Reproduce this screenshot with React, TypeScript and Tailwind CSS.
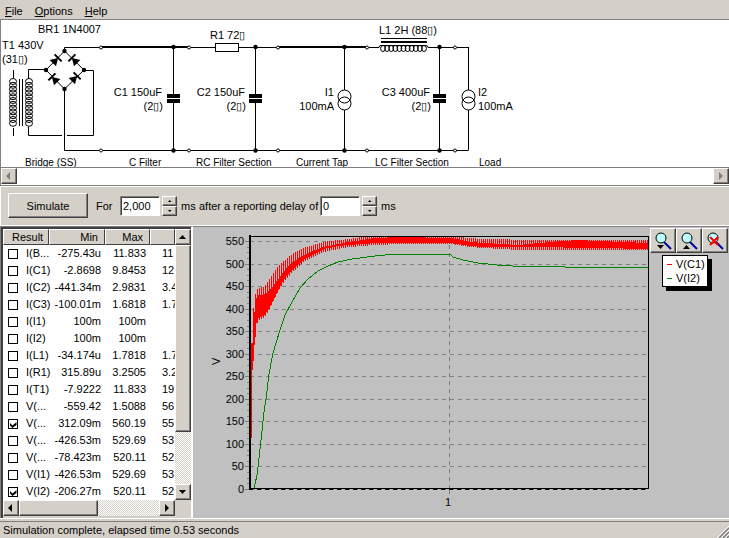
import React from 'react';
import clsx from 'clsx';

const RAISED = 'bg-[#d4d0c8] border border-t-white border-l-white border-r-[#404040] border-b-[#404040] shadow-[inset_-1px_-1px_0_#808080]';
const TRACK = 'bg-[repeating-conic-gradient(#d4d0c8_0_25%,#ffffff_0_50%)] bg-size-[2px_2px]';

type Result = { name: string; min: string; max: string; next: string; checked?: boolean };

const results: Result[] = [
  { name: 'I(B...', min: '-275.43u', max: '11.833', next: '11' },
  { name: 'I(C1)', min: '-2.8698', max: '9.8453', next: '12' },
  { name: 'I(C2)', min: '-441.34m', max: '2.9831', next: '3.4' },
  { name: 'I(C3)', min: '-100.01m', max: '1.6818', next: '1.7' },
  { name: 'I(I1)', min: '100m', max: '100m', next: '' },
  { name: 'I(I2)', min: '100m', max: '100m', next: '' },
  { name: 'I(L1)', min: '-34.174u', max: '1.7818', next: '1.7' },
  { name: 'I(R1)', min: '315.89u', max: '3.2505', next: '3.2' },
  { name: 'I(T1)', min: '-7.9222', max: '11.833', next: '19' },
  { name: 'V(...', min: '-559.42', max: '1.5088', next: '56' },
  { name: 'V(...', min: '312.09m', max: '560.19', next: '55', checked: true },
  { name: 'V(...', min: '-426.53m', max: '529.69', next: '53' },
  { name: 'V(...', min: '-78.423m', max: '520.11', next: '52' },
  { name: 'V(I1)', min: '-426.53m', max: '529.69', next: '53' },
  { name: 'V(I2)', min: '-206.27m', max: '520.11', next: '52', checked: true },
];

type Direction = 'up' | 'down' | 'left' | 'right';

const arrowPaths: Record<Direction, string> = {
  up: 'M0 6h7L3.5 2z',
  down: 'M0 2h7L3.5 6z',
  left: 'M5 0v8L1 4z',
  right: 'M2 0v8l4-4z',
};

const Arrow = ({ dir, className = 'w-2 h-2 fill-black' }: { dir: Direction; className?: string }) => (
  <svg viewBox="0 0 8 8" className={className}>
    <path d={arrowPaths[dir]} />
  </svg>
);

const ScrollButton = ({ dir, disabled }: { dir: Direction; disabled?: boolean }) => (
  <button
    aria-label={`Scroll ${dir}`}
    disabled={disabled}
    className={clsx('w-4 h-4 shrink-0 flex items-center justify-center', RAISED)}
  >
    <Arrow dir={dir} className={disabled ? 'w-2 h-2 fill-[#808080]' : 'w-2 h-2 fill-black'} />
  </button>
);

/* ---------- Schematic ---------- */

const Capacitor = ({ x }: { x: number }) => (
  <g>
    <path d={`M${x} 47V94M${x} 103V150`} stroke="#000" />
    <rect x={x - 6.5} y="94" width="13" height="4" />
    <rect x={x - 6.5} y="99" width="13" height="4" />
  </g>
);

const CurrentSource = ({ x }: { x: number }) => (
  <g fill="none" stroke="#000">
    <path d={`M${x} 47V90M${x} 110V150`} />
    <circle cx={x} cy="96.5" r="6.5" />
    <circle cx={x} cy="103.5" r="6.5" />
  </g>
);

const Diode = ({ x, y, angle }: { x: number; y: number; angle: number }) => (
  <g transform={`translate(${x} ${y}) rotate(${angle})`}>
    <path d="M-4.5 4.5h9L0-3z" />
    <path d="M-5-3H5" stroke="#000" strokeWidth="2" />
  </g>
);

const windings = Array.from({ length: 12 }, (_, i) => 81.5 + i * 3.8);
const chokeTurns = Array.from({ length: 11 }, (_, i) => 383 + i * 4.1);
const terminals = [101, 189, 278, 367, 455];
const joints = [173, 255, 344, 439];

const stages = [
  { x: 25, label: 'Bridge (SS)' },
  { x: 129, label: 'C Filter' },
  { x: 196, label: 'RC Filter Section' },
  { x: 296, label: 'Current Tap' },
  { x: 375, label: 'LC Filter Section' },
  { x: 479, label: 'Load' },
];

const Schematic = () => (
  <svg viewBox="1 20 520 147" className="block w-[520px] h-[147px] text-[11px]" role="img" aria-label="Power supply schematic">
    {/* transformer */}
    <g fill="none" stroke="#000">
      <path d="M13.5 70v8M13.5 128v8M19.5 79v47M22.5 79v47" />
      {windings.map((y) => (
        <React.Fragment key={y}>
          <ellipse cx="13" cy={y} rx="3.5" ry="3" />
          <ellipse cx="29" cy={y} rx="3.5" ry="3" />
        </React.Fragment>
      ))}
      <path d="M28.5 79V69.5H46M28.5 127v8.5H62M67 135.5H93.5V70.5H84" />
      {/* bridge */}
      <path d="M64.5 51L46 70L64.5 89L84 70zM64.5 51V47.5H99M64.5 89V150.5H99" />
    </g>
    <Diode x={56} y={60} angle={45} />
    <Diode x={74} y={60} angle={-45} />
    <Diode x={54} y={79} angle={-45} />
    <Diode x={75} y={78} angle={45} />
    {[[64.5, 51], [46, 70], [84, 70], [64.5, 89]].map(([x, y]) => (
      <circle key={`${x}-${y}`} cx={x} cy={y} r="2.2" />
    ))}

    {/* rails */}
    <g fill="none" stroke="#000">
      <path d="M102 47H188M279 47H366" strokeWidth="2" />
      <path d="M191 47.5H215M239 47.5H277M369 47.5H379M428 47.5H454M457 47.5H468.5" />
      <path d="M103 150.5H468.5" />
      <rect x="215.5" y="43.5" width="23" height="8" />
      <path d="M379 47.5q0-2 2-2h45q2 0 2 2M381 38.5H427" />
      <path d="M381 42H427" strokeWidth="2" />
      {chokeTurns.map((x) => (
        <ellipse key={x} cx={x} cy="48.5" rx="2.4" ry="3" />
      ))}
    </g>

    <Capacitor x={173.5} />
    <Capacitor x={255.5} />
    <Capacitor x={439.5} />
    <CurrentSource x={344.5} />
    <CurrentSource x={468.5} />

    {joints.map((x) => (
      <React.Fragment key={x}>
        <circle cx={x + 0.5} cy="47" r="2.2" />
        <circle cx={x + 0.5} cy="150.5" r="2.2" />
      </React.Fragment>
    ))}
    {terminals.map((x) => (
      <g key={x} fill="#fff" stroke="#000">
        <circle cx={x} cy="47.5" r="1.5" />
        <circle cx={x} cy="150.5" r="1.5" />
      </g>
    ))}

    <text x="38" y="33">BR1 1N4007</text>
    <text x="2" y="49">T1 430V</text>
    <text x="2" y="63">(31▯)</text>
    <text x="210" y="39">R1 72▯</text>
    <text x="379" y="34">L1 2H (88▯)</text>
    <g textAnchor="end">
      <text x="162" y="96">C1 150uF</text>
      <text x="163" y="110">(2▯)</text>
      <text x="245" y="96">C2 150uF</text>
      <text x="246" y="110">(2▯)</text>
      <text x="334" y="96">I1</text>
      <text x="334" y="110">100mA</text>
      <text x="430" y="96">C3 400uF</text>
      <text x="431" y="110">(2▯)</text>
    </g>
    <text x="478" y="96">I2</text>
    <text x="478" y="110">100mA</text>
    <g className="text-[10px]">
      {stages.map((s) => (
        <text key={s.label} x={s.x} y="166">{s.label}</text>
      ))}
    </g>
  </svg>
);

/* ---------- Simulation controls ---------- */

const Spinner = ({ label, value }: { label: string; value: string }) => (
  <div className="flex items-center gap-0.5">
    <input
      aria-label={label}
      defaultValue={value}
      className="w-10 h-5 px-0.5 bg-white border border-t-[#808080] border-l-[#808080] border-r-white border-b-white shadow-[inset_1px_1px_0_#404040] outline-none"
    />
    <div className="flex flex-col">
      <button aria-label={`Increase ${label}`} className={clsx('w-[15px] h-2.5 flex items-center justify-center', RAISED)}>
        <Arrow dir="up" className="w-1 h-1 fill-black" />
      </button>
      <button aria-label={`Decrease ${label}`} className={clsx('w-[15px] h-2.5 flex items-center justify-center', RAISED)}>
        <Arrow dir="down" className="w-1 h-1 fill-black" />
      </button>
    </div>
  </div>
);

const Controls = () => (
  <div className="h-[41px] flex items-center gap-1 pl-2 border-t border-t-[#808080] border-b border-b-white shadow-[inset_1px_1px_0_#ffffff]">
    <button className={clsx('w-20 h-[25px] mr-1', RAISED)}>Simulate</button>
    <span className="w-5">For</span>
    <Spinner label="duration" value="2,000" />
    <span className="w-3.5">ms</span>
    <span className="w-[117px] whitespace-nowrap">after a reporting delay of</span>
    <Spinner label="reporting delay" value="0" />
    <span>ms</span>
  </div>
);

/* ---------- Results list ---------- */

const TickBox = ({ label, checked }: { label: string; checked?: boolean }) => (
  <span className="grid w-2.5 h-2.5 shrink-0">
    <input
      type="checkbox"
      aria-label={label}
      defaultChecked={checked}
      className="peer col-start-1 row-start-1 appearance-none w-2.5 h-2.5 bg-white border border-black"
    />
    <svg viewBox="0 0 10 10" className="col-start-1 row-start-1 hidden peer-checked:block pointer-events-none">
      <path d="M2 4l2.5 2.5L8.5 3v3L4.5 9L2 6.5z" />
    </svg>
  </span>
);

const HEAD = 'h-4 p-0 font-normal leading-[14px] border border-t-white border-l-white border-r-[#404040] border-b-[#404040]';

const ResultsPanel = () => (
  <div className="w-[193px] shrink-0 flex flex-col pl-0.5 pt-0.5 border-l border-t border-[#808080] border-r-2 border-r-white shadow-[inset_2px_2px_0_#404040]">
    <div className="flex-1 flex min-h-0">
      <div className="flex-1 min-w-0 bg-white overflow-hidden">
        <table className="table-fixed w-[172px] border-separate border-spacing-0">
          <colgroup>
            <col className="w-[46px]" />
            <col className="w-[56px]" />
            <col className="w-[45px]" />
            <col className="w-[25px]" />
          </colgroup>
          <thead className="bg-[#d4d0c8]">
            <tr>
              <th className={clsx(HEAD, 'pl-2 text-left')}>Result</th>
              <th className={clsx(HEAD, 'pr-1.5 text-right')}>Min</th>
              <th className={clsx(HEAD, 'pr-1.5 text-right')}>Max</th>
              <th className={HEAD} />
            </tr>
          </thead>
          <tbody>
            {results.map((r, i) => (
              <tr key={i} className="h-[17px] leading-[17px] whitespace-nowrap">
                <td className="p-0">
                  <div className="flex items-center gap-2 pl-[5px]">
                    <TickBox label={`Plot ${r.name}`} checked={r.checked} />
                    {r.name}
                  </div>
                </td>
                <td className="p-0 pr-1 text-right">{r.min}</td>
                <td className="p-0 pr-1 text-right">{r.max}</td>
                <td className="p-0 pl-3 overflow-hidden">{r.next}</td>
              </tr>
            ))}
          </tbody>
        </table>
      </div>
      <div className={clsx('w-4 flex flex-col', TRACK)}>
        <ScrollButton dir="up" />
        <div className={clsx('h-[187px]', RAISED)} />
        <div className="flex-1" />
        <ScrollButton dir="down" />
      </div>
    </div>
    <div className="flex mb-0.5">
      <div className={clsx('flex-1 flex', TRACK)}>
        <ScrollButton dir="left" />
        <div className={clsx('w-[79px]', RAISED)} />
        <div className="flex-1" />
        <ScrollButton dir="right" />
      </div>
      <div className="w-4" />
    </div>
  </div>
);

/* ---------- Chart ---------- */

// x, spike top, band top, band bottom, spike bottom
const ripple = [
  [251, 343, 343, 438, 438],
  [252, 343, 343, 370, 375],
  [253, 308, 320, 355, 361],
  [255, 294, 304, 334, 337],
  [256, 290, 298, 323, 325],
  [258, 288, 295, 318, 321],
  [263, 287, 295, 316, 318],
  [267, 282, 292, 311, 313],
  [272, 274, 287, 302, 303],
  [277, 267, 280, 292, 293],
  [282, 262, 273, 282, 284],
  [287, 258, 267, 275, 278],
  [292, 254, 262, 270, 272],
  [297, 251, 259, 265, 268],
  [302, 248, 256, 261, 263],
  [307, 247, 253, 257, 260],
  [315, 244, 250, 253, 256],
  [323, 242, 247, 249, 252],
  [338, 240, 244, 246, 249],
  [348, 239, 242, 245, 247],
  [362, 237, 240, 244, 246],
  [375, 237, 238, 243, 245],
  [400, 237, 237, 243, 244],
  [450, 237, 238, 243, 244],
  [457, 237, 239, 244, 245],
  [470, 238, 242, 246, 247],
  [483, 239, 243, 247, 248],
  [503, 239, 244, 247, 249],
  [517, 240, 245, 247, 250],
  [550, 240, 242, 247, 250],
  [577, 240, 240, 248, 250],
  [597, 240, 241, 248, 250],
  [648, 240, 243, 249, 250],
];

const sample = (x: number, col: number) => {
  const i = Math.max(1, ripple.findIndex((p) => p[0] >= x));
  const a = ripple[i - 1];
  const b = ripple[i];
  return Math.round(a[col] + ((b[col] - a[col]) * (x - a[0])) / (b[0] - a[0]));
};

const ripplePath = Array.from({ length: 397 }, (_, i) => {
  const x = 251 + i;
  const spike = x % 2 === 1;
  return `M${x + 0.5} ${sample(x, spike ? 1 : 2)}V${sample(x, spike ? 4 : 3)}`;
}).join('');

const output = '254,488 255,484 257,475 258,467 260,449 262,431 264,412 266,399 269,374 273,353 280,330 285,315 292,302 300,288 308,279 318,271 328,266 338,262 352,259 375,256 385,255 415,254 450,254 453,257 463,260 478,263 497,265 513,266 550,266 565,267 648,267';

const volts = Array.from({ length: 12 }, (_, i) => i * 50);
const voltY = (v: number) => Math.round(489 - v * 0.451) + 0.5;
const minorTicks = Array.from({ length: 45 }, (_, i) => `M247 ${voltY(i * 12.5)}h3`).join('');

const Chart = () => (
  <svg viewBox="193 227 456 291" className="block flex-1 min-w-0 h-[291px] text-[11px]" role="img" aria-label="Voltage against time">
    <g shapeRendering="crispEdges" fill="none">
      <path d={minorTicks} stroke="#808080" />
      {volts.map((v) => (
        <React.Fragment key={v}>
          <path d={`M245 ${voltY(v)}h5`} stroke="#808080" />
          <path d={`M250 ${voltY(v)}H648`} stroke="#808080" strokeDasharray="4 4" />
        </React.Fragment>
      ))}
      <path d="M449.5 237V489" stroke="#808080" strokeDasharray="4 4" />
      <path d="M449.5 489v5" stroke="#808080" />
      <path d="M250 236.5H648.5V489" stroke="#000" />
      <path d="M250 235V489" stroke="#000" strokeWidth="2" />
      <path d="M249 488.5H649" stroke="#000" />
      <path d="M249 489.5H649" stroke="#000" strokeDasharray="4 4" />
      <path d={ripplePath} stroke="#f00" />
      <polyline points={output} stroke="#008000" />
    </g>
    <g textAnchor="end">
      {volts.map((v) => (
        <text key={v} x="244" y={Math.round(voltY(v)) + 3}>{v}</text>
      ))}
    </g>
    <text x="448" y="506" textAnchor="middle">1</text>
    <text transform="translate(220 365) rotate(-90)">V</text>
  </svg>
);

const Magnifier = ({ children }: { children: React.ReactNode }) => (
  <svg viewBox="0 0 18 18" className="w-[18px] h-[18px]">
    <path d="M10 10l7 7" stroke="#0000a0" strokeWidth="2" />
    <circle cx="7" cy="6" r="5" fill="#b0ffff" stroke="#000" />
    <path d="M4 4h1M7 4h1M10 4h1M5 6h1M8 6h1M4 8h1M7 8h1M10 8h1" stroke="#fff" />
    {children}
  </svg>
);

const TOOL = 'w-[26px] h-[25px] flex items-center justify-center';

const ChartTools = () => (
  <div className="w-20 shrink-0 flex flex-col items-start pl-px pt-px">
    <div className="flex">
      <button aria-label="Zoom out" className={clsx(TOOL, RAISED)}>
        <Magnifier><path d="M3 13h7l-3.5 4z" /></Magnifier>
      </button>
      <button aria-label="Zoom in" className={clsx(TOOL, RAISED)}>
        <Magnifier><path d="M3 17h7l-3.5-4z" /></Magnifier>
      </button>
      <button aria-label="Reset zoom" className={clsx(TOOL, RAISED)}>
        <Magnifier><path d="M4 5l8 8M12 5l-8 8" stroke="#f00" strokeWidth="2" /></Magnifier>
      </button>
    </div>
    <ul className="mt-0.5 ml-3 w-[46px] h-8 bg-white border border-black shadow-[4px_4px_0_#000] flex flex-col justify-center">
      <li className="flex items-center gap-1 pl-1 leading-[14px]">
        <span className="w-[5px] h-px shrink-0 bg-[#ff0000]" />V(C1)
      </li>
      <li className="flex items-center gap-1 pl-1 leading-[14px]">
        <span className="w-[5px] h-px shrink-0 bg-[#008000]" />V(I2)
      </li>
    </ul>
  </div>
);

export default function App() {
  return (
    <div className="min-h-screen flex flex-col bg-[#d4d0c8] text-black text-[11px] leading-4 font-['Liberation_Sans',Arial,sans-serif]">
      <nav className="h-[19px] flex items-center gap-3 px-[5px] pt-0.5">
        <button><u>F</u>ile</button>
        <button><u>O</u>ptions</button>
        <button><u>H</u>elp</button>
      </nav>

      <div className="bg-white border-t border-l border-[#808080] overflow-hidden">
        <Schematic />
      </div>
      <div className="h-[18px] flex bg-white border-t border-l border-[#808080]">
        <ScrollButton dir="left" disabled />
        <div className="flex-1" />
        <ScrollButton dir="right" disabled />
      </div>

      <Controls />

      <main className="flex-1 flex">
        <ResultsPanel />
        <section className="flex-1 min-w-0 flex items-start bg-[#c0c0c0] border-t border-[#808080]">
          <Chart />
          <ChartTools />
        </section>
      </main>

      <footer className="h-5 pt-0.5 border-t border-white">
        <div className="h-[17px] flex items-end justify-between pl-[3px] border-t border-[#808080]">
          <span>Simulation complete, elapsed time 0.53 seconds</span>
          <svg viewBox="0 0 12 12" className="w-3 h-3">
            <path d="M0 12L12 0M4 12l8-8M8 12l4-4" stroke="#fff" />
            <path d="M2 12L12 2M6 12l6-6M10 12l2-2" stroke="#808080" strokeWidth="1.5" />
          </svg>
        </div>
      </footer>
    </div>
  );
}
